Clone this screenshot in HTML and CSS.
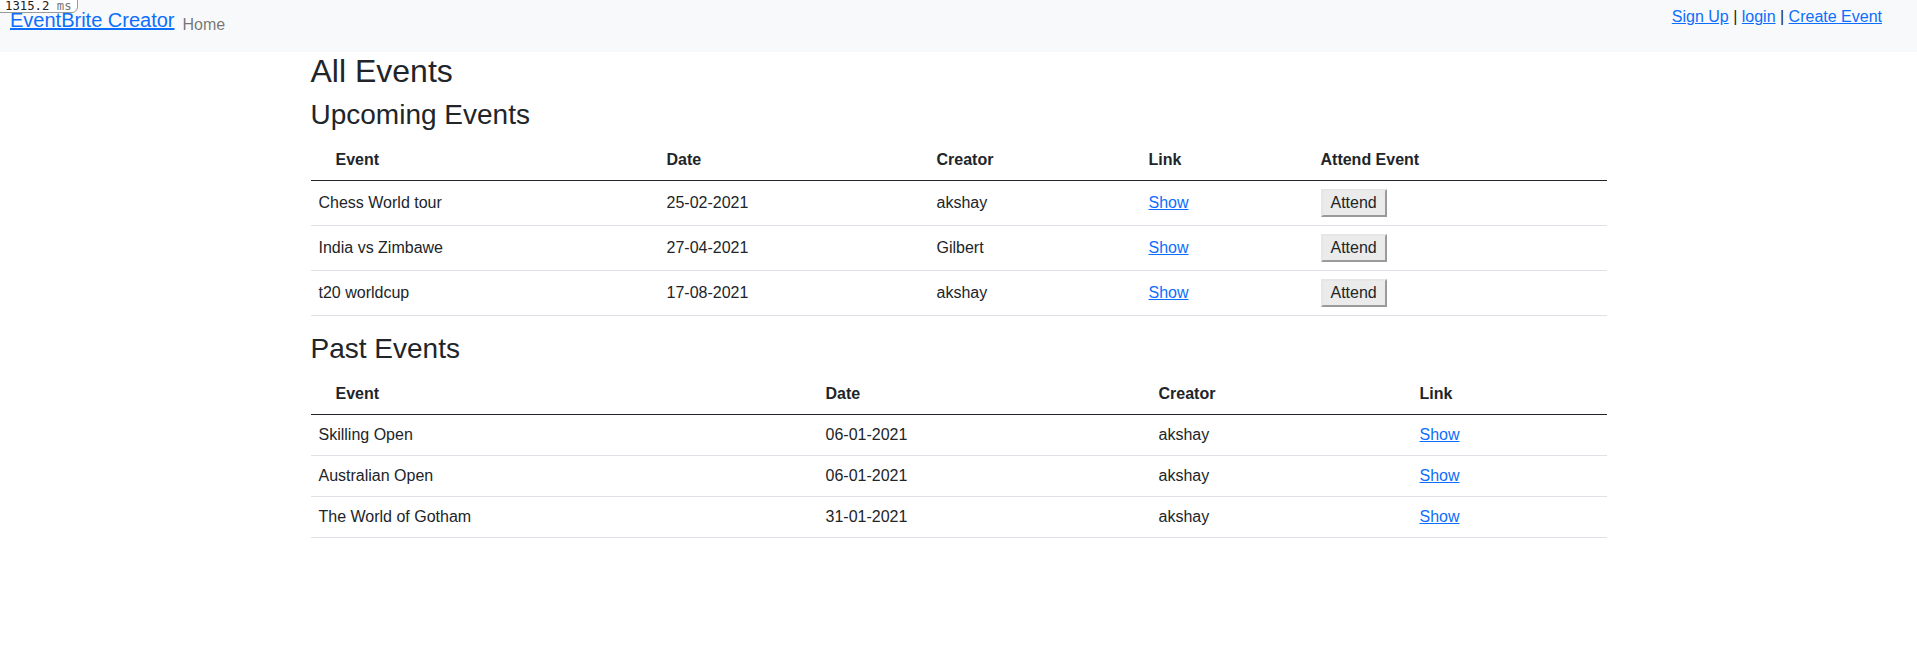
FILE: index.html
```html
<!DOCTYPE html>
<html lang="en">
<head>
<meta charset="utf-8">
<title>EventBrite Creator</title>
<link rel="stylesheet" href="styles.css">
</head>
<body>
<div class="timer"><span class="num">1315.2</span> <span class="unit">ms</span></div>
<nav class="navbar">
  <div class="nav-left">
    <a class="brand" href="#">EventBrite Creator</a>
    <a class="nav-link" href="#">Home</a>
  </div>
  <div class="nav-right">
    <a href="#">Sign Up</a> | <a href="#">login</a> | <a href="#">Create Event</a>
  </div>
</nav>
<main class="container">
  <h2 class="page-title">All Events</h2>
  <h3 class="section-title">Upcoming Events</h3>
  <table class="events">
    <colgroup>
      <col class="u1"><col class="u2"><col class="u3"><col class="u4"><col>
    </colgroup>
    <thead>
      <tr><th class="first">Event</th><th>Date</th><th>Creator</th><th>Link</th><th>Attend Event</th></tr>
    </thead>
    <tbody>
      <tr class="btn-row"><td>Chess World tour</td><td>25-02-2021</td><td>akshay</td><td><a href="#">Show</a></td><td><button class="attend">Attend</button></td></tr>
      <tr class="btn-row"><td>India vs Zimbawe</td><td>27-04-2021</td><td>Gilbert</td><td><a href="#">Show</a></td><td><button class="attend">Attend</button></td></tr>
      <tr class="btn-row"><td>t20 worldcup</td><td>17-08-2021</td><td>akshay</td><td><a href="#">Show</a></td><td><button class="attend">Attend</button></td></tr>
    </tbody>
  </table>
  <h3 class="section-title">Past Events</h3>
  <table class="events">
    <colgroup>
      <col class="p1"><col class="p2"><col class="p3"><col>
    </colgroup>
    <thead>
      <tr><th class="first">Event</th><th>Date</th><th>Creator</th><th>Link</th></tr>
    </thead>
    <tbody>
      <tr><td>Skilling Open</td><td>06-01-2021</td><td>akshay</td><td><a href="#">Show</a></td></tr>
      <tr><td>Australian Open</td><td>06-01-2021</td><td>akshay</td><td><a href="#">Show</a></td></tr>
      <tr><td>The World of Gotham</td><td>31-01-2021</td><td>akshay</td><td><a href="#">Show</a></td></tr>
    </tbody>
  </table>
</main>
</body>
</html>
```

FILE: styles.css
```css
* { box-sizing: border-box; }

body {
  margin: 0;
  font-family: "Liberation Sans", Arial, sans-serif;
  font-size: 16px;
  line-height: 1.5;
  color: #212529;
  background: #fff;
}

a { color: #0d6efd; text-decoration: underline; }

.timer {
  position: absolute;
  top: -8px;
  left: -2px;
  z-index: 10;
  padding: 6px 5px 0 6px;
  height: 21px;
  background: #fff;
  border: 1px solid #9a9a9a;
  border-radius: 0 0 6px 0;
  font-family: "DejaVu Sans Mono", monospace;
  font-size: 12.3px;
  line-height: 14px;
  color: #222;
  white-space: nowrap;
}
.timer .unit { color: #777; }

.navbar {
  display: flex;
  justify-content: space-between;
  align-items: flex-start;
  height: 52px;
  padding-top: 5px;
  background: #f8f9fa;
}

.nav-left {
  display: flex;
  align-items: flex-start;
  padding-left: 10px;
}

.brand {
  font-size: 20px;
  line-height: 30px;
  margin-right: 8px;
}

.nav-link {
  padding-top: 8px;
  line-height: 24px;
  color: rgba(0, 0, 0, 0.55);
  text-decoration: none;
}

.nav-right {
  padding-right: 35px;
  line-height: 24px;
}

.container {
  width: 1296px;
  margin: 0 auto;
}

.page-title {
  margin: 0 0 8px;
  font-size: 32px;
  font-weight: 500;
  line-height: 1.2;
}

.section-title {
  margin: 0 0 8px;
  font-size: 28px;
  font-weight: 500;
  line-height: 1.2;
}

.events {
  width: 100%;
  border-collapse: collapse;
  margin-bottom: 16px;
}

.events th,
.events td {
  padding: 8px;
  text-align: left;
  vertical-align: top;
  border-bottom: 1px solid #dee2e6;
}

.events thead th {
  font-weight: 700;
  vertical-align: bottom;
  border-bottom: 1px solid #212529;
}

.events th.first { padding-left: 25px; }

.u1 { width: 348px; }
.u2 { width: 270px; }
.u3 { width: 212px; }
.u4 { width: 172px; }

.p1 { width: 507px; }
.p2 { width: 333px; }
.p3 { width: 261px; }

.btn-row td { padding-top: 10px; padding-bottom: 10px; }
.btn-row td:last-child { padding-top: 8px; padding-bottom: 8px; }

.attend {
  display: block;
  margin: 0;
  padding: 0 8px;
  font-family: inherit;
  font-size: 16px;
  line-height: 24px;
  color: #212529;
  background: #ebebeb;
  border: 2px solid;
  border-color: #e6e6e6 #9a9a9a #9a9a9a #e6e6e6;
  border-radius: 0;
}
```
